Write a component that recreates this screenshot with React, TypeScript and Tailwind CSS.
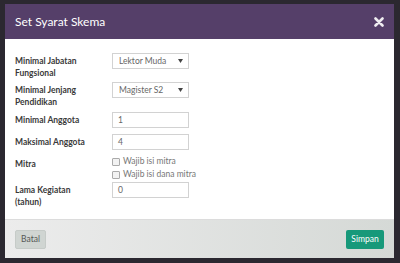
import React from 'react';

function SelectBox({ value }: { value: string }) {
  return (
    <div className="w-[77px] h-[16px] border border-[#d2d2d2] bg-white flex items-center justify-between pl-[6px] pr-[5px]">
      <span className="text-[8.5px] text-[#666] leading-none">{value}</span>
      <svg width="5" height="4" viewBox="0 0 5 4" className="fill-[#444]">
        <path d="M0 0h5L2.5 4z" />
      </svg>
    </div>
  );
}

function TextBox({ value }: { value: string }) {
  return (
    <div className="w-[77px] h-[16px] border border-[#d2d2d2] bg-white flex items-center pl-[5px]">
      <span className="text-[8.5px] text-[#666] leading-none">{value}</span>
    </div>
  );
}

function Check({ label }: { label: string }) {
  return (
    <label className="flex items-center gap-[3px] h-[9px]">
      <span className="w-[8px] h-[8px] rounded-[1px] border border-[#aaa] bg-[#f2f2f2]" />
      <span className="text-[8.5px] text-[#777] leading-none">{label}</span>
    </label>
  );
}

function Row({ label, h, children }: { label: React.ReactNode; h: string; children: React.ReactNode }) {
  return (
    <div className={`flex ${h}`}>
      <div className="w-[97px] pt-[2px] text-[8.5px] leading-[12px] font-bold text-[#3a3a3a]">{label}</div>
      <div>{children}</div>
    </div>
  );
}

export default function App() {
  return (
    <div
      className="w-[400px] h-[263px] bg-[#2b2830] pt-[4px] pl-[5px] overflow-hidden"
      style={{ fontFamily: 'Lato, "Noto Sans", sans-serif' }}
    >
      <div className="w-[389px] h-[254px] flex flex-col bg-white">
        {/* Header */}
        <div className="h-[35px] bg-[#553f69] flex items-center justify-between pl-[10px] pr-[10px]">
          <span className="text-[12px] text-white">Set Syarat Skema</span>
          <svg width="10" height="10" viewBox="0 0 10 10" className="opacity-90">
            <path d="M1.5 1.5l7 7M8.5 1.5l-7 7" stroke="#fff" strokeWidth="2.6" strokeLinecap="round" />
          </svg>
        </div>

        {/* Body */}
        <div className="flex-1 pt-[14px] pl-[10px]">
          <Row label={<>Minimal Jabatan<br />Fungsional</>} h="h-[29px]">
            <SelectBox value="Lektor Muda" />
          </Row>
          <Row label={<>Minimal Jenjang<br />Pendidikan</>} h="h-[30px]">
            <SelectBox value="Magister S2" />
          </Row>
          <Row label="Minimal Anggota" h="h-[22px]">
            <TextBox value="1" />
          </Row>
          <Row label="Maksimal Anggota" h="h-[22px]">
            <TextBox value="4" />
          </Row>
          <Row label="Mitra" h="h-[26px]">
            <div className="flex flex-col gap-[4px] pt-[1px]">
              <Check label="Wajib isi mitra" />
              <Check label="Wajib isi dana mitra" />
            </div>
          </Row>
          <Row label={<>Lama Kegiatan<br />(tahun)</>} h="h-[26px]">
            <TextBox value="0" />
          </Row>
        </div>

        {/* Footer */}
        <div className="h-[39px] border-t border-[#dcdcdc] bg-gradient-to-r from-[#ececec] to-[#d5d9d6] flex items-center justify-between px-[10px]">
          <button className="w-[31px] h-[19px] rounded-[2px] bg-[#d0d5d2] border border-[#c6cbc8] text-[8.5px] text-[#555]">
            Batal
          </button>
          <button className="w-[38px] h-[19px] rounded-[2px] bg-[#17997a] text-[8.5px] text-white">
            Simpan
          </button>
        </div>
      </div>
    </div>
  );
}
